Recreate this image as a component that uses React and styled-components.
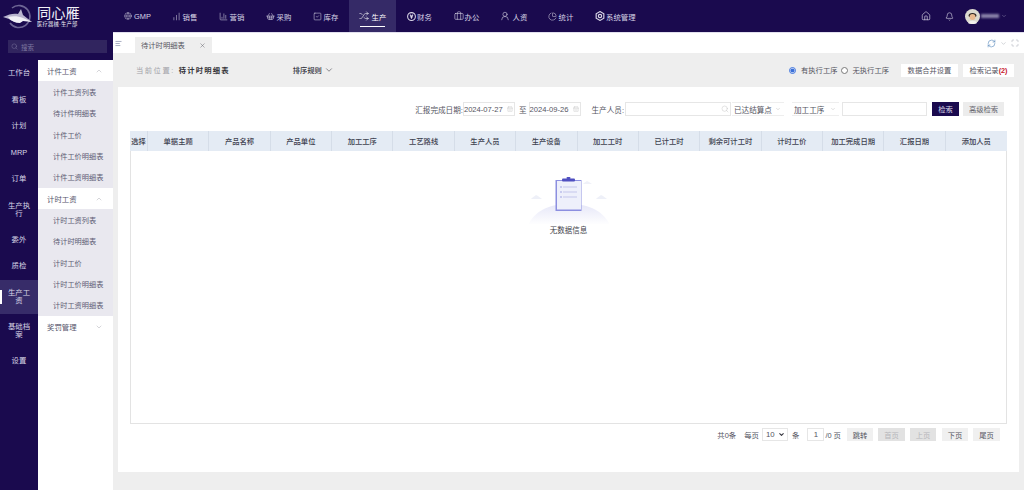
import React from "react";
import styled, { createGlobalStyle } from "styled-components";
import {
  AlignLeft,
  BarChart3,
  Bell,
  Briefcase,
  CalendarDays,
  ChartNoAxesColumnIncreasing,
  ChartPie,
  ChevronDown,
  ChevronUp,
  Globe,
  Home,
  Maximize,
  RefreshCw,
  Search,
  ShoppingBasket,
  Shuffle,
  SquareCheck,
  UserRound,
  X,
} from "lucide-react";

const GlobalStyle = createGlobalStyle`
  html, body {
    margin: 0;
    padding: 0;
    background: #eeeeee;
  }
  body, input, select, button {
    font-family: "Liberation Sans", "Noto Sans CJK SC", sans-serif;
  }
`;

const Page = styled.div`
  width: 1024px;
  height: 490px;
  display: flex;
  flex-direction: column;
  overflow: hidden;
`;

const TopBar = styled.header`
  height: 32px;
  flex: none;
  display: flex;
  align-items: stretch;
  background: #1a0a4e;
  color: #d9d6e6;
`;

const Brand = styled.div`
  width: 114px;
  flex: none;
  display: flex;
  align-items: center;
  padding-left: 2px;
  box-sizing: border-box;
  gap: 4px;
`;

const BrandText = styled.div`
  display: flex;
  flex-direction: column;
  color: #f2f1f7;
`;

const BrandName = styled.span`
  font-size: 14.2px;
  line-height: 14px;
`;

const BrandSub = styled.span`
  font-size: 5.3px;
  line-height: 6px;
  margin-top: 1px;
  letter-spacing: 0.2px;
  white-space: nowrap;
`;

const NavItem = styled.div`
  width: ${(p) => (p.$wide ? "auto" : "47px")};
  padding-left: ${(p) => (p.$wide ? "11px" : "0")};
  flex: none;
  display: flex;
  align-items: center;
  justify-content: ${(p) => (p.$wide ? "flex-start" : "center")};
  gap: ${(p) => p.$gap}px;
  font-size: 7.4px;
  white-space: nowrap;
  position: relative;
  background: ${(p) => (p.$active ? "#352a67" : "transparent")};
  color: ${(p) => (p.$active ? "#ffffff" : "#d9d6e6")};

  ${(p) =>
    p.$active &&
    `&::after {
      content: "";
      position: absolute;
      left: 11px;
      right: 11px;
      bottom: 5px;
      height: 1px;
      background: #ffffff;
    }`}
`;

const TopRight = styled.div`
  margin-left: auto;
  display: flex;
  align-items: center;
  padding-right: 17px;
`;

const TopIcon = styled.span`
  display: flex;
  margin-right: ${(p) => p.$gap}px;
`;

const NameBar = styled.span`
  width: 18px;
  height: 4px;
  margin: 0 2px 0 1px;
  background: #8b84aa;
  filter: blur(1.2px);
`;

const Body = styled.div`
  flex: 1;
  display: flex;
  min-height: 0;
`;

const Side = styled.div`
  width: 113px;
  flex: none;
  display: flex;
  flex-direction: column;
  background: #1a0a4e;
`;

const SearchStrip = styled.div`
  height: 28px;
  flex: none;
  box-sizing: border-box;
  padding: 8px 6px 7px 8px;
`;

const SearchBox = styled.div`
  height: 13px;
  background: #31255f;
  display: flex;
  align-items: center;
  gap: 3px;
  padding-left: 3px;
  font-size: 6.5px;
  color: #7d769f;
`;

const SideBody = styled.div`
  flex: 1;
  display: flex;
  min-height: 0;
`;

const Rail = styled.aside`
  width: 38px;
  flex: none;
`;

const RailItem = styled.div`
  height: ${(p) => (p.$double ? "34px" : "26.5px")};
  padding: 0 6px;
  display: flex;
  align-items: center;
  justify-content: center;
  text-align: center;
  font-size: 7.4px;
  line-height: 7.6px;
  color: #d9d6e6;
  position: relative;
  background: ${(p) => (p.$active ? "#372c69" : "transparent")};

  ${(p) =>
    p.$active &&
    `&::before {
      content: "";
      position: absolute;
      left: 0;
      top: 10px;
      bottom: 10px;
      width: 1.5px;
      background: #ffffff;
    }`}
`;

const SubMenu = styled.nav`
  flex: 1;
  background: #ffffff;
`;

const SubHead = styled.div`
  height: 21.33px;
  padding: 0 10px 0 9px;
  display: flex;
  align-items: center;
  justify-content: space-between;
  font-size: 7.4px;
  color: #55546a;
`;

const SubRow = styled.div`
  height: 21.33px;
  padding-left: 15px;
  display: flex;
  align-items: center;
  background: #e9e8ef;
  font-size: 7.2px;
  color: #5d5c74;
  white-space: nowrap;
`;

const Main = styled.main`
  flex: 1;
  display: flex;
  flex-direction: column;
  min-width: 0;
`;

const TabRow = styled.div`
  height: 21px;
  flex: none;
  display: flex;
  align-items: flex-end;
  background: #ffffff;
  border-top: 1px solid #e2e0ee;
  box-sizing: border-box;
`;

const Collapse = styled.span`
  display: flex;
  align-self: flex-start;
  margin: 7px 13px 0 2px;
  color: #3f4a78;
`;

const Tab = styled.div`
  width: 77px;
  height: 16px;
  box-sizing: border-box;
  padding: 0 6px;
  display: flex;
  align-items: center;
  justify-content: space-between;
  background: #eeeeee;
  font-size: 7.3px;
  color: #55555f;
`;

const TabTools = styled.div`
  margin-left: auto;
  align-self: center;
  display: flex;
  align-items: center;
  gap: 4px;
  padding-right: 5px;
  color: #9fa3ad;
`;

const ToolRow = styled.div`
  height: 34px;
  flex: none;
  display: flex;
  align-items: center;
  padding: 0 10px 0 23px;
  font-size: 7.3px;
  color: #55555f;
`;

const Crumb = styled.span`
  color: #a2a2a8;
  letter-spacing: 1.5px;
  margin-right: 4px;
  white-space: nowrap;
`;

const CrumbNow = styled.b`
  color: #333338;
  letter-spacing: 1.2px;
  margin-right: 63px;
  white-space: nowrap;
`;

const SortRule = styled.span`
  display: flex;
  align-items: center;
  gap: 2px;
  color: #33333c;
  font-weight: 500;
  white-space: nowrap;
`;

const RadioGroup = styled.label`
  display: flex;
  align-items: center;
  gap: 5px;
  margin-left: ${(p) => p.$ml};
  white-space: nowrap;
`;

const Radio = styled.input.attrs({ type: "radio" })`
  width: 7px;
  height: 7px;
  margin: 0;
  accent-color: #3a6fd8;
`;

const WhiteButton = styled.button`
  width: ${(p) => p.$w}px;
  height: 13px;
  margin-left: ${(p) => p.$ml}px;
  padding: 0;
  border: 0;
  background: #ffffff;
  font-size: 7.3px;
  color: #55555f;
  white-space: nowrap;
`;

const Red = styled.b`
  color: #c8202c;
`;

const Panel = styled.section`
  flex: 1;
  margin: 0 5px 18px;
  min-height: 0;
  background: #ffffff;
  padding: 15px 12px 31px;
  box-sizing: border-box;
  display: flex;
  flex-direction: column;
`;

const Filters = styled.div`
  height: 14px;
  flex: none;
  display: flex;
  align-items: stretch;
  justify-content: flex-end;
  padding-right: 3px;
  margin-bottom: 15px;
  font-size: 7.6px;
  color: #55555f;
`;

const FilterLabel = styled.span`
  display: flex;
  align-items: center;
  white-space: nowrap;
  margin-left: ${(p) => p.$ml || 0}px;
  margin-right: ${(p) => p.$mr || 0}px;
`;

const Field = styled.div`
  width: ${(p) => p.$w}px;
  box-sizing: border-box;
  margin-left: ${(p) => p.$ml || 0}px;
  padding: 0 1px 0 0;
  border: 1px solid #e6e6e6;
  display: flex;
  align-items: center;
  justify-content: space-between;
  font-size: 7.6px;
  color: #55555f;
  white-space: nowrap;
`;

const Picker = styled.div`
  width: ${(p) => p.$w}px;
  box-sizing: border-box;
  margin-left: ${(p) => p.$ml || 0}px;
  padding: 0 3px 0 2px;
  display: flex;
  align-items: center;
  justify-content: space-between;
  border-bottom: 1px solid #eeeeee;
  border-top: 1px solid #eeeeee;
  white-space: nowrap;
`;

const FilterButton = styled.button`
  width: ${(p) => p.$w}px;
  margin-left: ${(p) => p.$ml}px;
  padding: 0;
  border: 0;
  font-size: 7.3px;
  background: ${(p) => (p.$primary ? "#1a0a4e" : "#ececec")};
  color: ${(p) => (p.$primary ? "#d9d6e6" : "#66666e")};
`;

const Table = styled.div`
  flex: 1;
  min-height: 0;
  border: 1px solid #e3e3e3;
  border-top: 0;
  display: flex;
  flex-direction: column;
`;

const HeadRow = styled.div`
  height: 20px;
  flex: none;
  display: grid;
  grid-template-columns: 18px repeat(14, 1fr);
  background: #e4ebf4;
  margin: 0 -1px;
`;

const HeadCell = styled.div`
  display: flex;
  align-items: center;
  justify-content: center;
  font-size: 7.3px;
  font-weight: 500;
  color: #3e4250;
  white-space: nowrap;
  border-right: 1px solid #d5dde8;

  &:last-child {
    border-right: 0;
  }
`;

const Empty = styled.div`
  display: flex;
  flex-direction: column;
  align-items: center;
  padding-top: 26px;
  font-size: 7.5px;
  color: #44444c;
`;

const Pager = styled.div`
  height: 13px;
  flex: none;
  margin-top: 4px;
  padding-right: 7px;
  display: flex;
  align-items: stretch;
  justify-content: flex-end;
  font-size: 7.4px;
  color: #55555f;
`;

const PagerText = styled.span`
  display: flex;
  align-items: center;
  margin-left: ${(p) => p.$ml || 0}px;
  white-space: nowrap;
`;

const PageSize = styled.div`
  width: 26px;
  box-sizing: border-box;
  margin-left: 3px;
  padding: 0 2px 0 3px;
  border: 1px solid #e6e6e6;
  display: flex;
  align-items: center;
  justify-content: space-between;
  font-size: 7.8px;
`;

const PageInput = styled.input`
  width: 17px;
  box-sizing: border-box;
  margin-left: 8px;
  padding: 0;
  border: 1px solid #e6e6e6;
  font-size: 7.8px;
  text-align: center;
  color: #55555f;
`;

const PageButton = styled.button`
  width: ${(p) => p.$w}px;
  margin-left: ${(p) => p.$ml}px;
  padding: 0;
  border: 0;
  font-size: 7.3px;
  background: ${(p) => (p.$off ? "#e2e2e2" : "#f0f0f0")};
  color: ${(p) => (p.$off ? "#b6b6ba" : "#55555f")};
`;

function YuanIcon({ size, strokeWidth }) {
  return (
    <svg width={size} height={size} viewBox="0 0 12 12" fill="none" stroke="currentColor" strokeWidth={strokeWidth}>
      <circle cx="6" cy="6" r="5.2" />
      <path d="M4 3.500l2 2.500 2-2.500M6 6v3M4.300 6.500h3.400" />
    </svg>
  );
}

function GearIcon({ size, strokeWidth }) {
  return (
    <svg width={size} height={size} viewBox="0 0 12 12" fill="none" stroke="currentColor" strokeWidth={strokeWidth}>
      <path d="M6 .7l4.600 2.650v5.300L6 11.300 1.400 8.650v-5.300z" />
      <circle cx="6" cy="6" r="2" />
    </svg>
  );
}

const navs = [
  { label: "GMP", icon: Globe, size: 8, gap: 2 },
  { label: "销售", icon: ChartNoAxesColumnIncreasing, size: 9, gap: 2 },
  { label: "营销", icon: BarChart3, size: 9, gap: 2 },
  { label: "采购", icon: ShoppingBasket, size: 9, gap: 2 },
  { label: "库存", icon: SquareCheck, size: 9, gap: 2 },
  { label: "生产", icon: Shuffle, size: 10, gap: 3, active: true },
  { label: "财务", icon: YuanIcon, size: 9, gap: 1 },
  { label: "办公", icon: Briefcase, size: 10, gap: 1 },
  { label: "人资", icon: UserRound, size: 10, gap: 3 },
  { label: "统计", icon: ChartPie, size: 9, gap: 2 },
  { label: "系统管理", icon: GearIcon, size: 10, gap: 1, wide: true },
];

const rails = [
  { label: "工作台" },
  { label: "看板" },
  { label: "计划" },
  { label: "MRP" },
  { label: "订单" },
  { label: "生产执行", double: true },
  { label: "委外" },
  { label: "质检" },
  { label: "生产工资", double: true, active: true },
  { label: "基础档案", double: true },
  { label: "设置" },
];

const pieceRows = ["计件工资列表", "待计件明细表", "计件工价", "计件工价明细表", "计件工资明细表"];
const timeRows = ["计时工资列表", "待计时明细表", "计时工价", "计时工价明细表", "计时工资明细表"];
const columns = [
  "选择", "单据主题", "产品名称", "产品单位", "加工工序", "工艺路线", "生产人员", "生产设备",
  "加工工时", "已计工时", "剩余可计工时", "计时工价", "加工完成日期", "汇报日期", "添加人员",
];

function Logo() {
  return (
    <svg width="31" height="26" viewBox="0 0 31 26">
      <path d="M8 20a11 11 0 1 0 2-15" fill="none" stroke="#6e6695" strokeWidth="1.6" />
      <path d="M1 14c6-3 11-4 15-3l3-5 2 6 9 7-8-2-4 2c-5 0-9-1-11-3z" fill="#b9b5cf" />
      <path d="M6 14c5-1 10-1 15 1l9 4-9-1-3 2c-5 0-9-2-12-6z" fill="#f1f0f6" />
    </svg>
  );
}

function Avatar() {
  return (
    <svg width="15" height="15" viewBox="0 0 15 15">
      <circle cx="7.5" cy="7.5" r="7.5" fill="#dcdad0" />
      <path d="M3.5 7C3 3 12 3 11.5 7l-1 1h-6z" fill="#2a2320" />
      <circle cx="7.5" cy="8" r="3" fill="#e9b98f" />
      <path d="M3 14c1-3 8-3 9 0-2 1.300-7 1.300-9 0z" fill="#f1f0ec" />
    </svg>
  );
}

function EmptyArt() {
  return (
    <svg width="90" height="47" viewBox="0 0 90 47">
      <defs>
        <linearGradient id="mound" x1="0" y1="0" x2="0" y2="1">
          <stop offset="0" stopColor="#e6e7f8" />
          <stop offset="1" stopColor="#ffffff" />
        </linearGradient>
      </defs>
      <path d="M4 48C12 32 28 27 45 27s33 5 41 21z" fill="url(#mound)" />
      <path d="M8 21l4-3 2 1 4 3H7z" fill="#eef0f8" />
      <path d="M73 21l4-3 2 1 4 3H72z" fill="#eef0f8" />
      <path d="M60 6l3-2 2 1 3 2h-9z" fill="#f0f1f8" />
      <rect x="31.500" y="3" width="26" height="31" fill="#8c8fe0" />
      <rect x="33" y="4" width="24" height="28.500" fill="#eef0fb" />
      <rect x="38" y="1.500" width="13" height="3" rx="1" fill="#4f4fc0" />
      <rect x="42.500" y="0" width="4" height="2" rx="1" fill="#4f4fc0" />
      <circle cx="37" cy="10" r=".8" fill="#9a9ce0" />
      <circle cx="37" cy="15" r=".8" fill="#9a9ce0" />
      <circle cx="37" cy="20" r=".8" fill="#9a9ce0" />
      <rect x="39" y="9.500" width="14" height="1" fill="#c3c5ec" />
      <rect x="39" y="14.500" width="14" height="1" fill="#c3c5ec" />
      <rect x="39" y="19.500" width="14" height="1" fill="#c3c5ec" />
    </svg>
  );
}

export default function App() {
  return (
    <Page>
      <GlobalStyle />
      <TopBar>
        <Brand>
          <Logo />
          <BrandText>
            <BrandName>同心雁</BrandName>
            <BrandSub>医疗器械·生产部</BrandSub>
          </BrandText>
        </Brand>
        {navs.map(({ label, icon: Icon, size, gap, active, wide }) => (
          <NavItem key={label} $active={active} $gap={gap} $wide={wide}>
            <Icon size={size} strokeWidth={1.4} />
            {label}
          </NavItem>
        ))}
        <TopRight>
          <TopIcon $gap={14}>
            <Home size={10} strokeWidth={1.6} />
          </TopIcon>
          <TopIcon $gap={11}>
            <Bell size={9} strokeWidth={1.6} />
          </TopIcon>
          <Avatar />
          <NameBar />
          <ChevronDown size={6} strokeWidth={2} color="#8b84aa" />
        </TopRight>
      </TopBar>
      <Body>
        <Side>
          <SearchStrip>
            <SearchBox>
              <Search size={7} strokeWidth={1.6} />
              搜索
            </SearchBox>
          </SearchStrip>
          <SideBody>
            <Rail>
              {rails.map((r) => (
                <RailItem key={r.label} $double={r.double} $active={r.active}>
                  {r.label}
                </RailItem>
              ))}
            </Rail>
            <SubMenu>
              <SubHead>
                计件工资
                <ChevronUp size={8} strokeWidth={1.4} color="#a6a6b0" />
              </SubHead>
              {pieceRows.map((t) => (
                <SubRow key={t}>{t}</SubRow>
              ))}
              <SubHead>
                计时工资
                <ChevronUp size={8} strokeWidth={1.4} color="#a6a6b0" />
              </SubHead>
              {timeRows.map((t) => (
                <SubRow key={t}>{t}</SubRow>
              ))}
              <SubHead>
                奖罚管理
                <ChevronDown size={8} strokeWidth={1.4} color="#a6a6b0" />
              </SubHead>
            </SubMenu>
          </SideBody>
        </Side>
        <Main>
          <TabRow>
            <Collapse>
              <AlignLeft size={7} strokeWidth={1.5} />
            </Collapse>
            <Tab>
              待计时明细表
              <X size={7} strokeWidth={1.5} />
            </Tab>
            <TabTools>
              <RefreshCw size={9} strokeWidth={1.5} color="#4a7fb5" />
              <ChevronDown size={7} strokeWidth={1.5} />
              <Maximize size={8} strokeWidth={1.5} />
            </TabTools>
          </TabRow>
          <ToolRow>
            <Crumb>当前位置:</Crumb>
            <CrumbNow>待计时明细表</CrumbNow>
            <SortRule>
              排序规则
              <ChevronDown size={10} strokeWidth={1.3} />
            </SortRule>
            <RadioGroup $ml="auto">
              <Radio name="exec" defaultChecked />
              有执行工序
            </RadioGroup>
            <RadioGroup $ml="3px">
              <Radio name="exec" />
              无执行工序
            </RadioGroup>
            <WhiteButton $w={57} $ml={12}>
              数据合并设置
            </WhiteButton>
            <WhiteButton $w={51} $ml={5}>
              检索记录<Red>(2)</Red>
            </WhiteButton>
          </ToolRow>
          <Panel>
            <Filters>
              <FilterLabel>汇报完成日期:</FilterLabel>
              <Field $w={52}>
                2024-07-27
                <CalendarDays size={6} strokeWidth={1.2} color="#b5b5b5" />
              </Field>
              <FilterLabel $ml={4} $mr={2}>
                至
              </FilterLabel>
              <Field $w={52}>
                2024-09-26
                <CalendarDays size={6} strokeWidth={1.2} color="#b5b5b5" />
              </Field>
              <FilterLabel $ml={11} $mr={1}>
                生产人员:
              </FilterLabel>
              <Field $w={106}>
                <span />
                <Search size={8} strokeWidth={1.2} color="#bbbbbb" />
              </Field>
              <Picker $w={52} $ml={1}>
                已达结算点
                <ChevronDown size={6} strokeWidth={1.3} color="#a0a0a0" />
              </Picker>
              <Picker $w={47} $ml={8}>
                加工工序
                <ChevronDown size={6} strokeWidth={1.3} color="#a0a0a0" />
              </Picker>
              <Field $w={85} $ml={3} />
              <FilterButton $primary $w={27} $ml={5}>
                检索
              </FilterButton>
              <FilterButton $w={41} $ml={4}>
                高级检索
              </FilterButton>
            </Filters>
            <Table>
              <HeadRow>
                {columns.map((c) => (
                  <HeadCell key={c}>{c}</HeadCell>
                ))}
              </HeadRow>
              <Empty>
                <EmptyArt />
                无数据信息
              </Empty>
            </Table>
            <Pager>
              <PagerText>共0条</PagerText>
              <PagerText $ml={8}>每页</PagerText>
              <PageSize>
                10
                <ChevronDown size={7} strokeWidth={3.5} color="#33333c" />
              </PageSize>
              <PagerText $ml={4}>条</PagerText>
              <PageInput defaultValue="1" />
              <PagerText $ml={1}>/0 页</PagerText>
              <PageButton $w={26} $ml={6}>
                跳转
              </PageButton>
              <PageButton $off $w={27} $ml={5}>
                首页
              </PageButton>
              <PageButton $off $w={26} $ml={5}>
                上页
              </PageButton>
              <PageButton $w={26} $ml={6}>
                下页
              </PageButton>
              <PageButton $w={27} $ml={5}>
                尾页
              </PageButton>
            </Pager>
          </Panel>
        </Main>
      </Body>
    </Page>
  );
}
